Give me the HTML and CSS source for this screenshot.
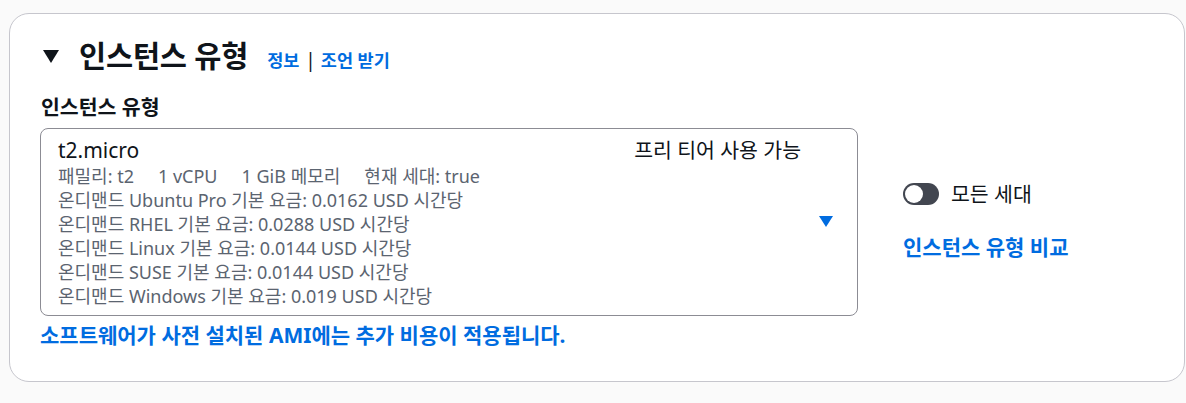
FILE: index.html
```html
<!DOCTYPE html>
<html lang="ko">
<head>
<meta charset="utf-8">
<link rel="stylesheet" href="styles.css">
</head>
<body>
<div class="card">
  <div class="header">
    <span class="caret"></span>
    <h2 class="title">인스턴스 유형</h2>
    <span class="links"><a class="link">정보</a><span class="sep">|</span><a class="link">조언 받기</a></span>
  </div>
  <div class="label">인스턴스 유형</div>
  <div class="row">
    <div class="select">
      <div class="sel-main">
        <div class="sel-top">
          <span class="name">t2.micro</span>
          <span class="tag">프리 티어 사용 가능</span>
        </div>
        <div class="meta"><span>패밀리: t2</span><span>1 vCPU</span><span>1 GiB 메모리</span><span>현재 세대: true</span></div>
        <div class="detail">온디맨드 Ubuntu Pro 기본 요금: 0.0162 USD 시간당</div>
        <div class="detail">온디맨드 RHEL 기본 요금: 0.0288 USD 시간당</div>
        <div class="detail">온디맨드 Linux 기본 요금: 0.0144 USD 시간당</div>
        <div class="detail">온디맨드 SUSE 기본 요금: 0.0144 USD 시간당</div>
        <div class="detail">온디맨드 Windows 기본 요금: 0.019 USD 시간당</div>
      </div>
      <svg class="arrow" width="14" height="12" viewBox="0 0 14 12"><polygon points="0,0 14,0 7,11" fill="#006ce0"/></svg>
    </div>
    <div class="side">
      <div class="toggle-row"><span class="toggle"><span class="knob"></span></span><span class="toggle-label">모든 세대</span></div>
      <a class="link compare">인스턴스 유형 비교</a>
    </div>
  </div>
  <a class="link note">소프트웨어가 사전 설치된 AMI에는 추가 비용이 적용됩니다.</a>
</div>
</body>
</html>
```

FILE: styles.css
```css
* { box-sizing: border-box; }
body {
  margin: 0;
  background: #fafafa;
  font-family: "Noto Sans", "Noto Sans CJK KR", sans-serif;
  color: #0f141a;
  width: 1186px;
  height: 403px;
  overflow: hidden;
}
.card {
  margin: 13px 0 0 9px;
  width: 1176px;
  height: 369px;
  background: #ffffff;
  border: 1px solid #c6c6cd;
  border-radius: 20px;
  padding: 24px 30px 0 30px;
}
.header {
  display: flex;
  align-items: center;
  height: 36px;
}
.caret {
  width: 0; height: 0;
  border-left: 8px solid transparent;
  border-right: 8px solid transparent;
  border-top: 13px solid #0f141a;
  margin-left: 3px;
  margin-right: 20px;
}
.title {
  margin: 0;
  font-size: 29.5px;
  font-weight: 700;
  line-height: 36px;
  letter-spacing: -0.2px;
}
.links {
  margin-left: 19px;
  margin-top: 7px;
  font-size: 17.5px;
  font-weight: 700;
  display: flex;
  align-items: center;
}
.link { color: #006ce0; font-weight: 700; text-decoration: none; }
.sep { margin: 0 5px 0 6px; color: #0f141a; font-weight: 400; font-size: 19px; }
.label {
  margin-top: 20px;
  font-size: 20.5px;
  font-weight: 700;
  line-height: 26px;
  padding-left: 1px;
}
.row {
  display: flex;
  margin-top: 8px;
}
.select {
  width: 818px;
  height: 188px;
  border: 1px solid #8c8c94;
  border-radius: 8px;
  padding: 7px 24px 0 17px;
  display: flex;
  align-items: flex-start;
}
.sel-main { flex: 1; }
.sel-top {
  display: flex;
  justify-content: space-between;
  align-items: center;
  height: 28px;
}
.name { font-size: 21px; line-height: 28px; }
.tag { font-size: 20.5px; margin-right: 18px; line-height: 28px; }
.meta, .detail {
  font-size: 18px;
  line-height: 24px;
  color: #5b6470;
  white-space: nowrap;
}
.meta { margin-top: 0px; display: flex; gap: 0 24px; }
.arrow { margin-top: 80px; }
.side {
  margin-left: 45px;
  padding-top: 53px;
  display: flex;
  flex-direction: column;
}
.toggle-row { display: flex; align-items: center; height: 26px; }
.toggle {
  width: 36px; height: 22px;
  border-radius: 11px;
  background: #424650;
  position: relative;
  display: inline-block;
}
.knob {
  position: absolute;
  left: 2px; top: 2px;
  width: 18px; height: 18px;
  border-radius: 50%;
  background: #fff;
}
.toggle-label { margin-left: 12px; font-size: 20.5px; line-height: 26px; }
.compare { margin-top: 27px; font-size: 21px; line-height: 26px; }
.note {
  display: block;
  margin-top: 6px;
  font-size: 21px;
  line-height: 26px;
}
```
